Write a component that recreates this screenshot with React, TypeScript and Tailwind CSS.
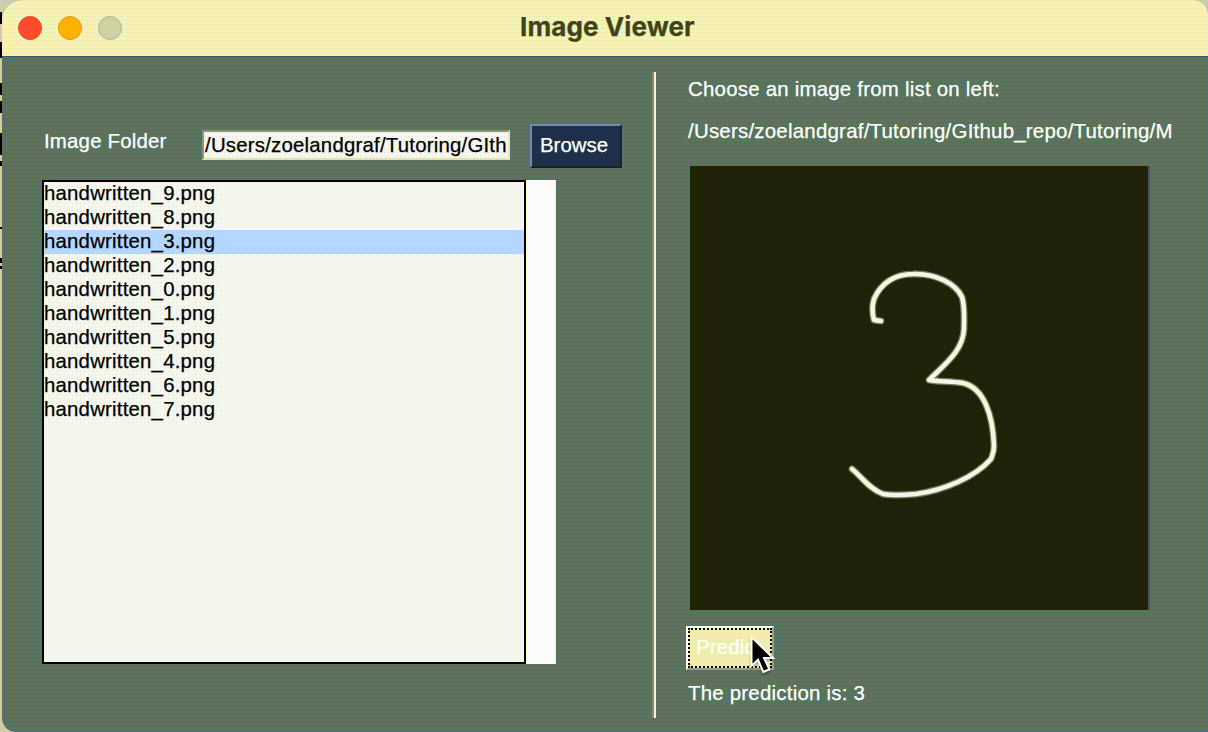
import React from "react";

const files = [9, 8, 3, 2, 0, 1, 5, 4, 6, 7].map((n) => `handwritten_${n}.png`);

const digit =
  "M881 321L874 320Q871 309 874 299C881 283 895 274 913 274C936 273 956 284 962 297C965 307 964 316 964 329C963 351 945 364 929 380C941 382 950 381 963 383C984 388 993 415 994 446C994 452 993 454 991 459C975 477 945 490 916 494Q894 496 883 494C869 489 861 476 852 469";

// Dark marks of the window behind, visible along the left edge: [gap above, height]
const marks = [
  [12, 12],
  [18, 16],
  [25, 12],
  [6, 12],
  [20, 22],
  [6, 5],
  [61, 2],
  [29, 5],
  [3, 3],
];

function Backdrop() {
  return (
    <div className="w-0.5 shrink-0">
      {marks.map(([gap, height], i) => (
        <div key={i} className="w-0.5 bg-black" style={{ marginTop: gap, height }} />
      ))}
    </div>
  );
}

function Titlebar() {
  return (
    <header className="flex h-[57px] shrink-0 items-center border-b border-[#40557a] bg-[conic-gradient(at_1px_1px,transparent_75%,#dedab4_0),repeating-conic-gradient(#ececfa_0_25%,#f4f1aa_0_50%)] bg-[length:4px_4px,2px_2px] pl-4">
      <div className="flex gap-4">
        <span className="size-6 rounded-full border border-[#e04a3a] bg-[#ff4b2c]" />
        <span className="size-6 rounded-full border border-[#dd9c10] bg-[#ffb000]" />
        <span className="size-6 rounded-full border border-[#b0b0a0] bg-[repeating-conic-gradient(#cfcfd4_0_25%,#cccc9c_0_50%)] bg-[length:2px_2px]" />
      </div>
      <h1 className="ml-[398px] pb-0.5 font-['Inter'] text-[26px] leading-8 font-bold tracking-[0.1px] text-[#42421c]">
        Image Viewer
      </h1>
    </header>
  );
}

function FileList() {
  return (
    <div className="mt-3 ml-10 flex h-[484px] w-[514px]">
      <ul className="w-[484px] border-2 border-black bg-[conic-gradient(at_1px_1px,transparent_75%,#e4e4e4_0),repeating-conic-gradient(#f2f2ff_0_25%,#f8f8ee_0_50%)] bg-[length:4px_4px,2px_2px] text-black">
        {files.map((file) => (
          <li
            key={file}
            className={
              file === "handwritten_3.png"
                ? "h-6 bg-[#b3d7ff] leading-[22px]"
                : "h-6 leading-[22px]"
            }
          >
            {file}
          </li>
        ))}
      </ul>
      <div className="w-[30px] border-x border-[#f4f4cc] bg-[#fcfcfc]" />
    </div>
  );
}

function Pointer() {
  return (
    <svg className="absolute top-[8px] left-[61px] h-[44px] w-[32px] drop-shadow-[0_2px_1px_rgba(0,0,0,0.3)]" viewBox="0 0 32 44">
      <path d="M4.500 3v29l6.500-6.200 5.300 12.200 6-2.600-5.300-11.400h9z" fill="#000" stroke="#fff" strokeWidth="2" />
    </svg>
  );
}

export default function App() {
  return (
    <div className="flex h-[732px] w-[1208px] overflow-hidden bg-[#cfccae] font-['Liberation_Sans',sans-serif] text-[20.4px] tracking-[0.2px] [-webkit-text-stroke:0.25px_currentColor]">
      <Backdrop />
      <div className="flex flex-1 flex-col overflow-hidden rounded-tl-[20px] rounded-tr-[14px] rounded-bl-[14px] bg-[conic-gradient(at_1px_1px,transparent_75%,#667866_0),repeating-conic-gradient(#516aa0_0_25%,#59705b_0_50%)] bg-[length:4px_4px,2px_2px] text-white">
        <Titlebar />
        <main className="flex min-h-0 flex-1">
          <section className="w-[650px] pt-[67px]">
            <div className="flex h-11 items-start">
              <label className="mt-[5px] ml-[42px] w-[158px] leading-6">Image Folder</label>
              <div className="mt-[6px] h-[30px] w-[308px] overflow-hidden border-2 border-t-[#92927a] border-l-[#92927a] border-r-[#e8e8c0] border-b-[#e0e0b8] bg-[conic-gradient(at_1px_1px,transparent_75%,#e4e4e4_0),repeating-conic-gradient(#f2f2ff_0_25%,#f8f8ee_0_50%)] bg-[length:4px_4px,2px_2px] pl-px leading-[26px] tracking-[0.21px] whitespace-nowrap text-black">
                /Users/zoelandgraf/Tutoring/GIth
              </div>
              <button className="ml-5 h-11 w-[92px] border-2 border-t-[#7c86aa] border-l-[#7c86aa] border-r-[#17202c] border-b-[#17202c] bg-[repeating-conic-gradient(#1c2c60_0_25%,#20304c_0_50%)] bg-[length:2px_2px] pb-0.5 pl-2 text-left leading-[38px] tracking-[0.02px]">
                Browse
              </button>
            </div>
            <FileList />
          </section>
          <div className="mt-[15px] h-[646px] w-1 border-l-2 border-[#8c8870] bg-[#f5f3cf]" />
          <section className="flex flex-1 flex-col items-start pt-5 pl-8">
            <p className="leading-6 tracking-[0.24px]">Choose an image from list on left:</p>
            <p className="mt-[18px] leading-6 tracking-[0.25px] whitespace-nowrap">
              /Users/zoelandgraf/Tutoring/GIthub_repo/Tutoring/M
            </p>
            <div className="mt-[23px] ml-0.5 h-[444px] w-[460px] border-r-2 border-[#4c5060] bg-[conic-gradient(at_1px_1px,transparent_75%,#2c2a10_0),repeating-conic-gradient(#202028_0_25%,#1e1d00_0_50%)] bg-[length:4px_4px,2px_2px]">
              <svg className="h-full w-full" viewBox="690 166 458 444" fill="none" strokeLinecap="round" strokeLinejoin="round">
                <path d={digit} stroke="#77775f" strokeWidth="7" />
                <path d={digit} stroke="#f6f6e4" strokeWidth="4.5" />
              </svg>
            </div>
            <div className="relative mt-4 -ml-0.5 h-11 w-[88px]">
              <button className="h-11 w-[88px] border-2 border-t-white border-l-white border-r-[#a09c80] border-b-[#a09c80]">
                <span className="block h-10 w-[84px] border-2 border-dotted border-black bg-[repeating-conic-gradient(#e4e4f4_0_25%,#f0edaa_0_50%)] bg-[length:2px_2px] pl-1.5 text-left leading-[34px]">
                  Predict
                </span>
              </button>
              <Pointer />
            </div>
            <p className="mt-[11px] leading-6 tracking-[0.24px]">The prediction is: 3</p>
          </section>
        </main>
      </div>
    </div>
  );
}
